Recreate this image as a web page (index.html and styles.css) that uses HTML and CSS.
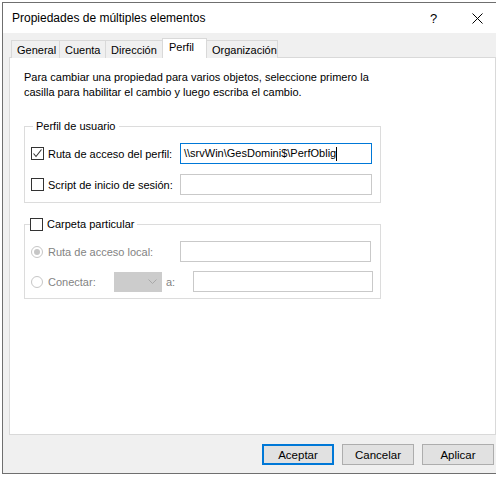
FILE: index.html
```html
<!DOCTYPE html>
<html lang="es">
<head>
<meta charset="utf-8">
<title>Propiedades de múltiples elementos</title>
<link rel="stylesheet" href="styles.css">
</head>
<body>
<div class="window">
  <div class="titlebar">
    <span class="title">Propiedades de múltiples elementos</span>
    <span class="help">?</span>
    <span class="close"><svg width="11" height="11" viewBox="0 0 11 11"><path d="M0.5 0.5 L10.5 10.5 M10.5 0.5 L0.5 10.5" stroke="#000" stroke-width="1" fill="none"/></svg></span>
  </div>
  <div class="body">
    <div class="tabs">
      <div class="tab">General</div>
      <div class="tab">Cuenta</div>
      <div class="tab">Dirección</div>
      <div class="tab active">Perfil</div>
      <div class="tab">Organización</div>
    </div>
    <div class="panel">
      <p class="intro">Para cambiar una propiedad para varios objetos, seleccione primero la<br>casilla para habilitar el cambio y luego escriba el cambio.</p>
      <fieldset class="group g1">
        <legend>Perfil de usuario</legend>
        <div class="row">
          <label class="chk"><span class="box"><svg width="11" height="11" viewBox="0 0 11 11"><path d="M1.5 5.5 L4 8.5 L9.5 1.5" stroke="#333" stroke-width="1.1" fill="none"/></svg></span>Ruta de acceso del perfil:</label>
          <div class="input focus">\\srvWin\GesDomini$\PerfOblig<span class="caret"></span></div>
        </div>
        <div class="row">
          <label class="chk"><span class="box"></span>Script de inicio de sesión:</label>
          <div class="input"></div>
        </div>
      </fieldset>
      <fieldset class="group g2">
        <legend><label class="chk"><span class="box"></span>Carpeta particular</label></legend>
        <div class="row">
          <label class="rad disabled"><span class="radio checked"></span>Ruta de acceso local:</label>
          <div class="input w191"></div>
        </div>
        <div class="row2">
          <label class="rad disabled conn"><span class="radio"></span>Conectar:</label>
          <div class="combo"><svg width="9" height="6" viewBox="0 0 9 6"><path d="M0.5 0.5 L4.5 4.5 L8.5 0.5" stroke="#a8a8a8" fill="none"/></svg></div>
          <span class="a disabled">a:</span>
          <div class="input w180"></div>
        </div>
      </fieldset>
    </div>
    <div class="buttons">
      <button class="btn default">Aceptar</button>
      <button class="btn">Cancelar</button>
      <button class="btn">Aplicar</button>
    </div>
  </div>
</div>
</body>
</html>
```
FILE: styles.css
```css
html, body {
  margin: 0;
  padding: 0;
  width: 496px;
  height: 477px;
  overflow: hidden;
  background: #fff;
}
body {
  font-family: "Liberation Sans", Arial, sans-serif;
  font-size: 11px;
  color: #000;
}
.window {
  box-sizing: border-box;
  margin: 2px 0 0 2px;
  width: 500px;
  height: 472px;
  border: 1px solid #6f6f6f;
  border-right: none;
  background: #f0f0f0;
  display: flex;
  flex-direction: column;
}
.titlebar {
  height: 30px;
  background: #fff;
  display: flex;
  align-items: center;
  padding-left: 9px;
  font-family: "Liberation Sans", Arial, sans-serif;
  font-size: 12px;
}
.title { flex: 1; }
.help {
  width: 12px;
  font-size: 13px;
  margin-right: 30px;
}
.close {
  width: 30px;
  display: flex;
}
.body {
  flex: 1;
  display: flex;
  flex-direction: column;
  padding: 7px 6px 0 6px;
}
.tabs {
  display: flex;
  padding-left: 2px;
  height: 18px;
  align-items: flex-end;
  position: relative;
  z-index: 1;
}
.tab {
  box-sizing: border-box;
  height: 18px;
  border: 1px solid #d9d9d9;
  border-bottom: none;
  border-right: none;
  padding: 0 5px;
  line-height: 18px;
  background: #f0f0f0;
}
.tab:nth-child(1) { width: 48px; }
.tab:nth-child(2) { width: 46px; }
.tab:nth-child(3) { width: 57px; }
.tab:nth-child(5) { width: 71px; border-right: 1px solid #d9d9d9; }
.tab.active {
  width: 45px;
  height: 20px;
  background: #fff;
  border: 1px solid #d9d9d9;
  border-bottom: none;
  line-height: 16px;
  padding: 0 6px;
}
.tab.active + .tab { border-left: none; }
.panel {
  box-sizing: border-box;
  margin-top: -1px;
  height: 378px;
  background: #fff;
  border: 1px solid #d9d9d9;
  padding: 12px 0 0 14px;
  display: flex;
  flex-direction: column;
}
.intro {
  margin: 0;
  line-height: 15px;
}
.group {
  box-sizing: border-box;
  width: 357px;
  margin: 0;
  border: 1px solid #dcdcdc;
  padding: 0 0 8px 6px;
  display: flex;
  flex-direction: column;
  gap: 10px;
}
.group legend {
  padding: 0 3px;
  margin-left: 2px;
  line-height: 14px;
}
.g1 { margin-top: 19px; padding-top: 10px; padding-bottom: 7px; }
.g2 { margin-top: 14px; padding-top: 10px; gap: 9px; padding-bottom: 6px; }
.g2 legend { margin-left: -1px; padding: 0 3px 0 0; }
.row {
  display: flex;
  align-items: center;
}
.row2 {
  display: flex;
  align-items: center;
}
.chk, .rad {
  display: flex;
  align-items: center;
  width: 149px;
}
.conn { width: 83px; }
.box {
  box-sizing: border-box;
  width: 13px;
  height: 13px;
  border: 1px solid #333;
  background: #fff;
  margin-right: 4px;
  display: flex;
  align-items: center;
  justify-content: center;
}
.g2 legend .chk { width: auto; }
.radio {
  box-sizing: border-box;
  width: 12px;
  height: 12px;
  border: 1px solid #c6c6c6;
  border-radius: 50%;
  margin-right: 5px;
  display: flex;
  align-items: center;
  justify-content: center;
}
.radio.checked::after {
  content: "";
  width: 6px;
  height: 6px;
  border-radius: 50%;
  background: #c6c6c6;
}
.disabled { color: #838383; }
.input {
  box-sizing: border-box;
  width: 192px;
  height: 21px;
  border: 1px solid #c9c9c9;
  background: #fff;
  padding: 0 3px;
  line-height: 19px;
  white-space: nowrap;
  display: flex;
  align-items: center;
}
.input.focus { border-color: #0078d7; }
.w191 { width: 191px; }
.w180 { width: 180px; height: 21px; }
.caret {
  display: inline-block;
  width: 1px;
  height: 14px;
  background: #000;
}
.combo {
  box-sizing: border-box;
  width: 48px;
  height: 20px;
  background: #cccccc;
  border: 1px solid #cccccc;
  display: flex;
  align-items: center;
  justify-content: flex-end;
  padding-right: 4px;
}
.a {
  width: 31px;
  padding-left: 4px;
  box-sizing: border-box;
}
.buttons {
  display: flex;
  justify-content: flex-end;
  gap: 8px;
  padding: 9px 2px 0 0;
}
.btn {
  box-sizing: border-box;
  width: 72px;
  height: 21px;
  font-family: "Liberation Sans", Arial, sans-serif;
  font-size: 11.5px;
  color: #000;
  background: #e1e1e1;
  border: 1px solid #adadad;
  padding: 0;
  margin: 0;
}
.btn.default { border: 2px solid #0078d7; }
```
